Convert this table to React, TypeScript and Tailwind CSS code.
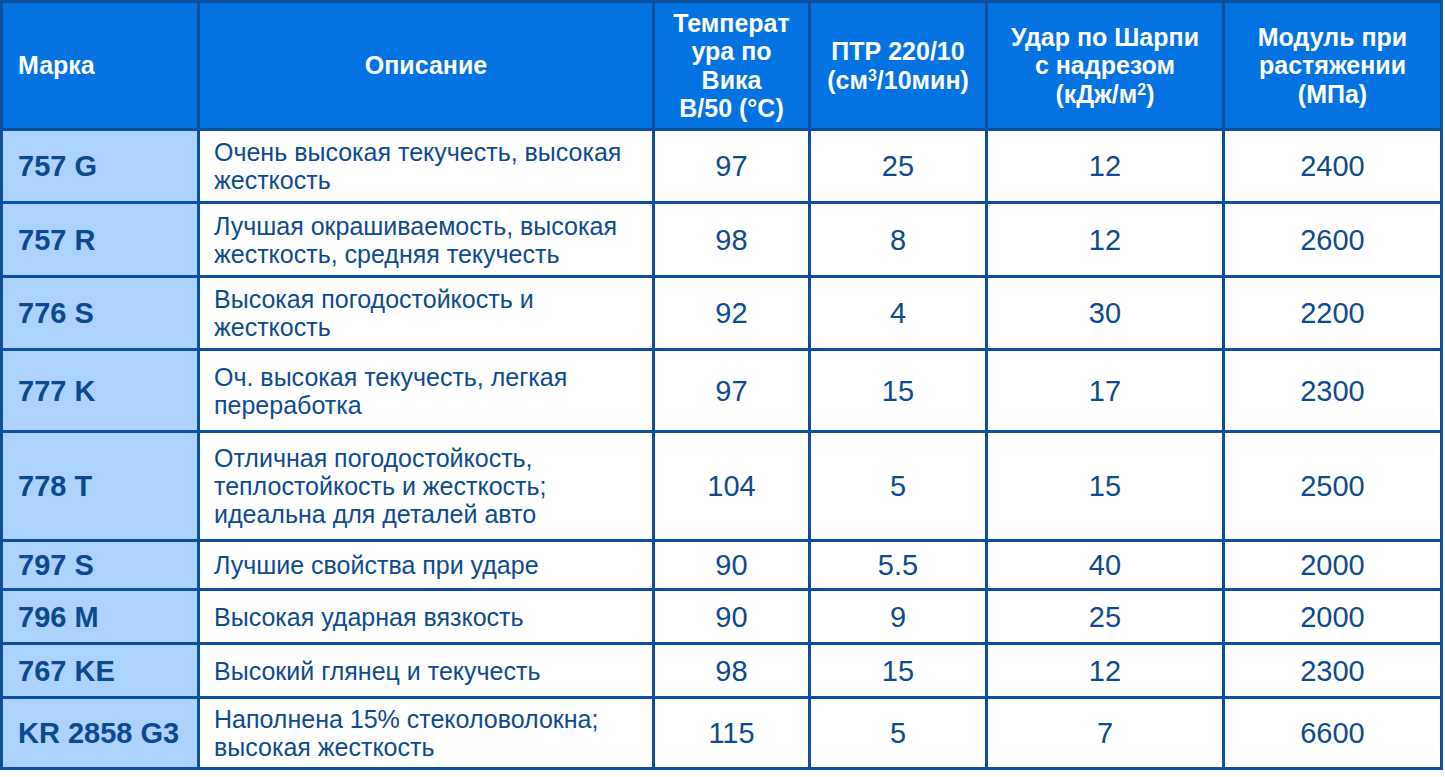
import React from "react";

const rows: { m: string; d: React.ReactNode; v: string[] }[] = [
  { m: "757 G", d: <>Очень высокая текучесть, высокая<br />жесткость</>, v: ["97", "25", "12", "2400"] },
  { m: "757 R", d: <>Лучшая окрашиваемость, высокая<br />жесткость, средняя текучесть</>, v: ["98", "8", "12", "2600"] },
  { m: "776 S", d: <>Высокая погодостойкость и<br />жесткость</>, v: ["92", "4", "30", "2200"] },
  { m: "777 K", d: <>Оч. высокая текучесть, легкая<br />переработка</>, v: ["97", "15", "17", "2300"] },
  { m: "778 T", d: <>Отличная погодостойкость,<br />теплостойкость и жесткость;<br />идеальна для деталей авто</>, v: ["104", "5", "15", "2500"] },
  { m: "797 S", d: <>Лучшие свойства при ударе</>, v: ["90", "5.5", "40", "2000"] },
  { m: "796 M", d: <>Высокая ударная вязкость</>, v: ["90", "9", "25", "2000"] },
  { m: "767 KE", d: <>Высокий глянец и текучесть</>, v: ["98", "15", "12", "2300"] },
  { m: "KR 2858 G3", d: <>Наполнена 15% стеколоволокна;<br />высокая жесткость</>, v: ["115", "5", "7", "6600"] },
];

const hdr = "bg-[#0273e1] text-white font-bold text-[25px] leading-[28.5px] flex items-center";

export default function App() {
  return (
    <div className="w-[1445px] h-[777px] bg-white" style={{ fontFamily: '"Liberation Sans", Arial, sans-serif' }}>
      <div className="grid w-[1443px] grid-cols-[194px_452px_153px_174px_234px_215px] grid-rows-[125px_70px_71px_70px_79px_106px_46px_51px_51px_68px] gap-[3px] p-[3px] bg-[#0c4f9d]">
        <div className={`${hdr} pl-[15px]`}>Марка</div>
        <div className={`${hdr} justify-center`}>Описание</div>
        <div className={`${hdr} justify-center text-center`}>
          <span>Температ<br />ура по<br />Вика<br />B/50 (°C)</span>
        </div>
        <div className={`${hdr} justify-center text-center`}>
          <span>ПТР 220/10<br />(см<sup className="text-[16px]">3</sup>/10мин)</span>
        </div>
        <div className={`${hdr} justify-center text-center`}>
          <span>Удар по Шарпи<br />с надрезом<br />(кДж/м<sup className="text-[16px]">2</sup>)</span>
        </div>
        <div className={`${hdr} justify-center text-center`}>
          <span>Модуль при<br />растяжении<br />(МПа)</span>
        </div>
        {rows.map((r) => (
          <React.Fragment key={r.m}>
            <div className="bg-[#acd3fe] text-[#0b4a8e] font-bold text-[29px] flex items-center pl-[15px] pt-[2px]">{r.m}</div>
            <div className="bg-white text-[#0f4a8f] text-[25px] leading-[28px] flex items-center pl-[14px]">
              <span>{r.d}</span>
            </div>
            {r.v.map((v, i) => (
              <div key={i} className="bg-white text-[#0f4a8f] text-[29px] flex items-center justify-center pt-[2px]">
                {v}
              </div>
            ))}
          </React.Fragment>
        ))}
      </div>
    </div>
  );
}
